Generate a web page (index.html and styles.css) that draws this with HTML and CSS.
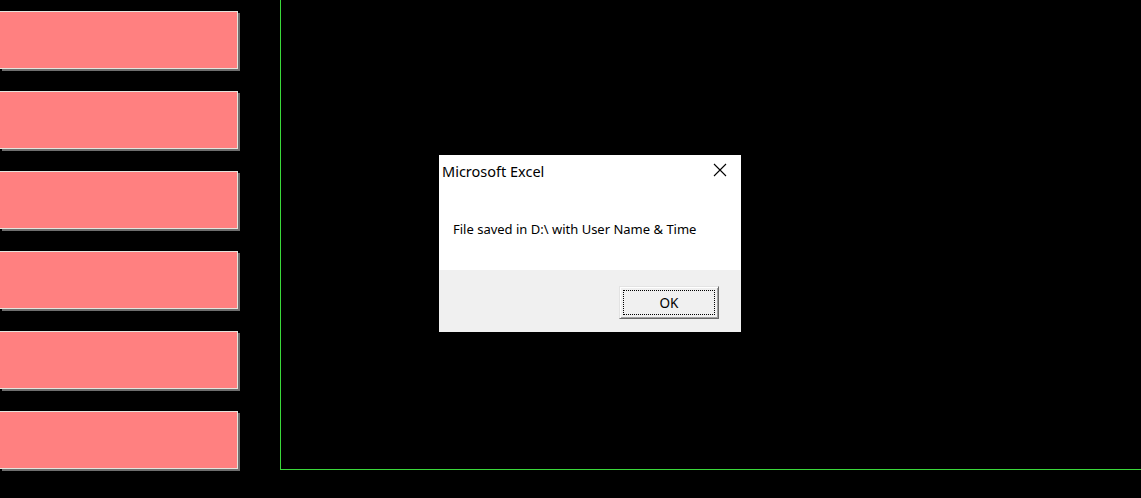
FILE: index.html
```html
<!DOCTYPE html>
<html>
<head>
<meta charset="utf-8">
<link rel="stylesheet" href="styles.css">
</head>
<body>
<div class="page">
  <div class="buttons">
    <div class="btn"></div>
    <div class="btn"></div>
    <div class="btn"></div>
    <div class="btn"></div>
    <div class="btn"></div>
    <div class="btn"></div>
  </div>
  <div class="canvas"></div>
</div>
<div class="dialog">
  <div class="titlebar">
    <span class="title">Microsoft Excel</span>
    <svg class="close" width="14" height="14" viewBox="0 0 14 14"><path d="M1 1 L13 13 M13 1 L1 13" stroke="#000" stroke-width="1.1" fill="none"/></svg>
  </div>
  <div class="message">File saved in D:\ with User Name &amp; Time</div>
  <div class="footer">
    <div class="ok"><span class="focus">OK</span></div>
  </div>
</div>
</body>
</html>
```
FILE: styles.css
```css
html, body {
  margin: 0;
  padding: 0;
  background: #000;
  width: 1141px;
  height: 498px;
  overflow: hidden;
  font-family: "Noto Sans", "Open Sans", sans-serif;
}
.page {
  display: flex;
  align-items: flex-start;
}
.buttons {
  display: flex;
  flex-direction: column;
  gap: 22px;
  padding-top: 11px;
  width: 240px;
}
.btn {
  height: 56px;
  width: 237px;
  background: #ff8080;
  border-top: 1px solid #e4e4dc;
  border-right: 1px solid #e4e4dc;
  border-bottom: 1px solid #e4e4dc;
  box-shadow: 2px 2px 0 #6e6e6e;
}
.canvas {
  margin-left: 40px;
  flex: 1;
  height: 469px;
  border-left: 1px solid #3ad83a;
  border-bottom: 1px solid #3ad83a;
}
.dialog {
  position: absolute;
  left: 439px;
  top: 155px;
  width: 302px;
  height: 177px;
  background: #fff;
  display: flex;
  flex-direction: column;
  box-sizing: border-box;
}
.titlebar {
  height: 30px;
  display: flex;
  align-items: center;
  justify-content: space-between;
  padding: 0 14px 0 3px;
}
.title {
  font-size: 14.5px;
  color: #000;
  margin-top: 1px;
}
.close {
  display: block;
}
.message {
  font-size: 13px;
  color: #000;
  padding-left: 14px;
  height: 85px;
  display: flex;
  align-items: center;
  padding-top: 3px;
  box-sizing: border-box;
}
.footer {
  flex: 1;
  background: #f0f0f0;
  display: flex;
  justify-content: flex-end;
  align-items: flex-start;
  padding: 16px 22px 0 0;
}
.ok {
  width: 100px;
  height: 33px;
  box-sizing: border-box;
  background: #f0f0f0;
  border-top: 1px solid #e3e3e3;
  border-left: 1px solid #e3e3e3;
  border-right: 1px solid #696969;
  border-bottom: 1px solid #696969;
  box-shadow: inset 1px 1px 0 #fff, inset -1px -1px 0 #a0a0a0;
  padding: 3px;
  display: flex;
}
.focus {
  flex: 1;
  border: 1px dotted #000;
  display: flex;
  align-items: center;
  justify-content: center;
  font-size: 13.5px;
  color: #000;
}
```
